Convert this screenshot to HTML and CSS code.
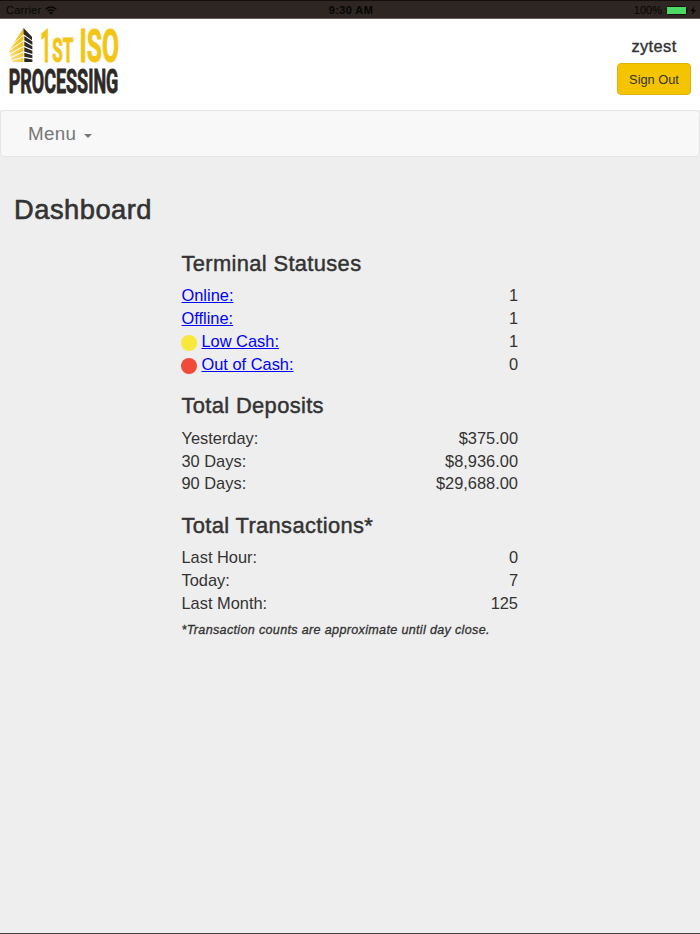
FILE: index.html
```
<!DOCTYPE html>
<html lang="en">
<head>
  <meta charset="UTF-8" />
  <meta name="viewport" content="width=device-width, initial-scale=1" />
  <title>Dashboard</title>
  <link rel="stylesheet" href="styles.css">
</head>
<body>
  <div class="status-bar">
    <div class="carrier">
      <span>Carrier</span>
      <svg class="wifi" width="12" height="9" viewBox="0 0 12 9">
        <path d="M0.8 3.2 Q6 -1.2 11.2 3.2" fill="none" stroke="#050505" stroke-width="1.5"/>
        <path d="M2.7 5.2 Q6 2.3 9.3 5.2" fill="none" stroke="#050505" stroke-width="1.5"/>
        <path d="M4 6.6 Q6 5 8 6.6 L6 8.8 Z" fill="#050505"/>
      </svg>
    </div>
    <div class="clock">9:30 AM</div>
    <div class="battery">
      <span>100%</span>
      <svg width="30" height="9" viewBox="0 0 30 9">
        <rect x="0.5" y="0.5" width="20" height="8" rx="1" fill="#4cd964" stroke="#151210"/>
        <path d="M21.4 3 Q23 4.5 21.4 6 Z" fill="#050505"/>
        <path d="M28.2 0.4 L24.4 5 H26.8 L26 8.8 L30 4 H27.6 Z" fill="#050505"/>
      </svg>
    </div>
  </div>

  <header class="header">
    <svg class="logo" width="112" height="70" viewBox="8 26 112 70">
      <defs>
        <linearGradient id="lit" gradientUnits="userSpaceOnUse" x1="9" y1="56" x2="23" y2="48">
          <stop offset="0" stop-color="#fbe08a"/>
          <stop offset="1" stop-color="#f3c116"/>
        </linearGradient>
      </defs>
      <!-- building, one slab per floor -->
      <g fill="url(#lit)">
        <path d="M23.5 28 L13.5 43.5 L23.5 34.2 Z"/>
        <path d="M13 44.8 L9.4 50 L23.5 40 V35.4 Z"/>
        <path d="M9.2 51 L9.7 53.6 L23.5 45.8 V41.2 Z"/>
        <path d="M9.9 54.6 L10.5 57 L23.5 51.3 V46.9 Z"/>
        <path d="M10.8 58 L11.4 60 L23.5 56.6 V52.4 Z"/>
        <path d="M11.7 60.8 L12 62 H23.5 V57.7 Z"/>
      </g>
      <g fill="#2d2926">
        <path d="M23.5 28 L32 36.8 V40.2 L23.5 34.2 Z"/>
        <path d="M24.3 35.9 L32.4 41.5 V45 L24.3 40.3 Z"/>
        <path d="M24.3 41.6 L32.4 46.2 V49.6 L24.3 46 Z"/>
        <path d="M24.3 47.3 L32.4 50.8 V54 L24.3 51.5 Z"/>
        <path d="M24.3 52.7 L32.4 55.2 V58.2 L24.3 56.7 Z"/>
        <path d="M24.3 57.9 L32.4 59.4 V62 H24.3 Z"/>
      </g>
      <g class="logo-top">
        <text x="40.3" y="61.7" font-size="46.5" textLength="11" lengthAdjust="spacingAndGlyphs">1</text>
        <text x="52.3" y="61.7" font-size="34" textLength="21" lengthAdjust="spacingAndGlyphs">ST</text>
        <text x="79.5" y="61.5" font-size="45.5" textLength="39.5" lengthAdjust="spacingAndGlyphs">ISO</text>
      </g>
      <text class="logo-bottom" x="8.7" y="93.2" font-size="33.5" textLength="109.6" lengthAdjust="spacingAndGlyphs">PROCESSING</text>
    </svg>
    <div class="user">
      <div class="username">zytest</div>
      <button class="sign-out" type="button">Sign Out</button>
    </div>
  </header>

  <nav class="navbar">
    <span class="menu">Menu</span>
    <span class="caret"></span>
  </nav>

  <main class="content">
    <h1>Dashboard</h1>

    <div class="stats">
      <h2>Terminal Statuses</h2>
      <div class="row"><a href="#">Online:</a><span>1</span></div>
      <div class="row"><a href="#">Offline:</a><span>1</span></div>
      <div class="row"><div class="label"><i class="dot yellow"></i><a href="#">Low Cash:</a></div><span>1</span></div>
      <div class="row"><div class="label"><i class="dot red"></i><a href="#">Out of Cash:</a></div><span>0</span></div>

      <h2>Total Deposits</h2>
      <div class="row"><span>Yesterday:</span><span>$375.00</span></div>
      <div class="row"><span>30 Days:</span><span>$8,936.00</span></div>
      <div class="row"><span>90 Days:</span><span>$29,688.00</span></div>

      <h2>Total Transactions*</h2>
      <div class="row"><span>Last Hour:</span><span>0</span></div>
      <div class="row"><span>Today:</span><span>7</span></div>
      <div class="row"><span>Last Month:</span><span>125</span></div>

      <p class="note">*Transaction counts are approximate until day close.</p>
    </div>
  </main>
</body>
</html>
```
FILE: styles.css
```
* {
  box-sizing: border-box;
}

body {
  margin: 0;
  height: 934px;
  display: flex;
  flex-direction: column;
  overflow: hidden;
  font-family: "Liberation Sans", Arial, sans-serif;
  font-size: 16.4px;
  color: #333;
  background-color: #eee;
  border-bottom: 1px solid #444;
}

.status-bar {
  display: grid;
  grid-template-columns: 1fr auto 1fr;
  align-items: center;
  height: 19px;
  padding: 1px 4px 0 6px;
  background-color: #2d2622;
  border-top: 1px solid #110e0d;
  border-bottom: 1px solid #625d5a;
  color: #050505;
  font-size: 11px;
}

.carrier,
.battery {
  display: flex;
  align-items: center;
  gap: 4px;
}

.carrier {
  letter-spacing: 0.25px;
}

.clock {
  font-weight: bold;
  letter-spacing: 0.4px;
}

.battery {
  justify-content: flex-end;
}

.header {
  display: flex;
  justify-content: space-between;
  height: 91px;
  padding: 7px 9px 0 8px;
  background-color: #fff;
}

.logo {
  overflow: visible;
  font-family: Roboto, "Liberation Sans", sans-serif;
  font-weight: bold;
}

.logo-top {
  fill: #f3c516;
  stroke: #f3c516;
  stroke-width: 1;
}

.logo-bottom {
  fill: #2d2926;
  stroke: #2d2926;
  stroke-width: 0.9;
}

.user {
  display: flex;
  flex-direction: column;
  align-items: center;
  padding-top: 10px;
}

.username {
  height: 27px;
  line-height: 20px;
  letter-spacing: 0.4px;
  -webkit-text-stroke: 0.4px #333;
}

.sign-out {
  width: 74px;
  height: 32px;
  padding: 0;
  border: 1px solid #dfb20c;
  border-radius: 4px;
  background-color: #f4c400;
  color: #333;
  font-family: inherit;
  font-size: 12.8px;
}

.navbar {
  display: flex;
  align-items: center;
  height: 47px;
  padding-left: 27px;
  border: 1px solid #e5e5e5;
  border-radius: 4px;
  background-color: #f8f8f8;
  color: #777;
}

.menu {
  font-size: 18.8px;
  letter-spacing: 0.35px;
}

.caret {
  margin: 4px 0 0 8px;
  border-top: 4px solid #777;
  border-left: 4px solid transparent;
  border-right: 4px solid transparent;
}

.content {
  padding: 37px 14px 0;
}

h1,
h2 {
  margin: 0;
  font-weight: normal;
}

h1 {
  font-size: 27.3px;
  line-height: 32px;
  letter-spacing: 0.5px;
  -webkit-text-stroke: 0.6px #333;
}

.stats {
  width: 336.5px;
  margin: 25px 0 0 167.5px;
}

h2 {
  height: 33.4px;
  margin-top: 17.3px;
  font-size: 21.9px;
  line-height: 26px;
  letter-spacing: 0.35px;
  -webkit-text-stroke: 0.45px #333;
}

.row {
  display: flex;
  justify-content: space-between;
  height: 22.9px;
  line-height: 23px;
}

.label {
  display: flex;
}

.dot {
  width: 16px;
  height: 16px;
  margin: 5px 4.5px 0 -0.5px;
  border-radius: 50%;
}

.yellow {
  background-color: #f8e83b;
}

.red {
  background-color: #f1493a;
}

a {
  color: #00f;
}

.note {
  margin: 7px 0 0;
  font-size: 12.6px;
  line-height: 16px;
  font-style: italic;
  letter-spacing: 0.32px;
  -webkit-text-stroke: 0.3px #333;
}
```
